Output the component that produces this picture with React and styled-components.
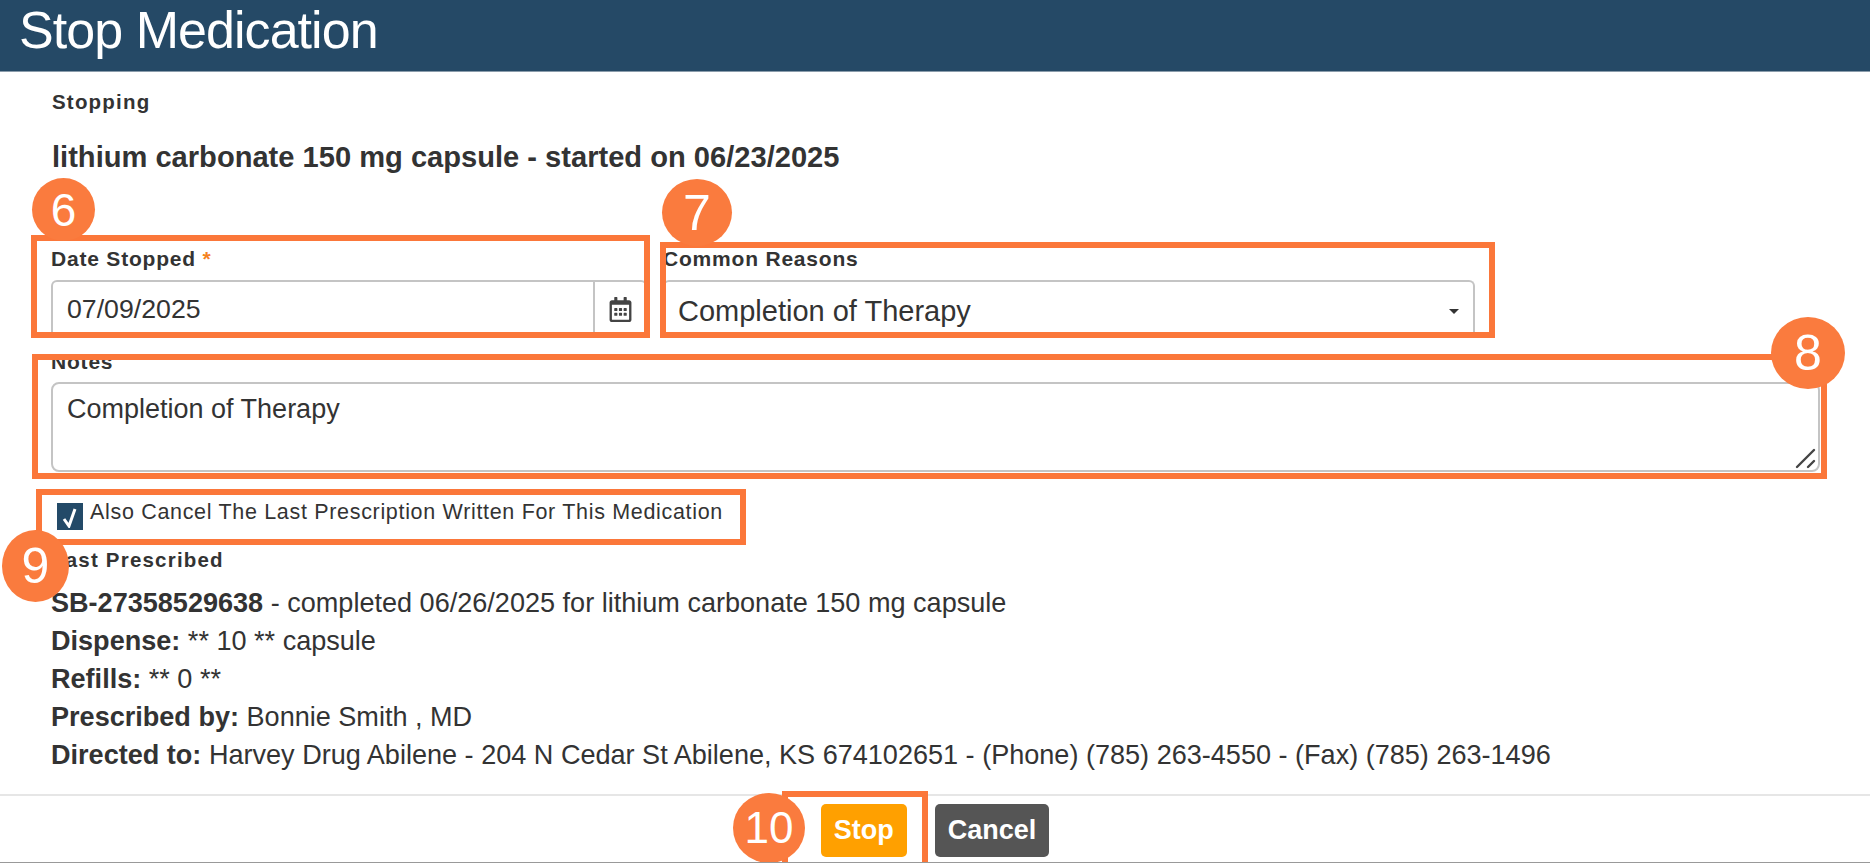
import React from 'react';
import styled, { createGlobalStyle } from 'styled-components';
import { FaRegCalendarAlt } from 'react-icons/fa';

const GlobalStyle = createGlobalStyle`
  html, body {
    margin: 0;
    padding: 0;
    background: #fff;
  }
  * {
    box-sizing: border-box;
  }
`;

// Page frame
const Page = styled.div`
  position: relative;
  width: 1870px;
  height: 863px;
  overflow: hidden;
  display: flex;
  flex-direction: column;
  font-family: 'Liberation Sans', Arial, sans-serif;
  color: #333;
  background: #fff;
  border-bottom: 1px solid #999;
`;

const Header = styled.header`
  height: 72px;
  flex: none;
  display: flex;
  align-items: center;
  padding: 0 0 11px 19px;
  background: #254966;
  border-bottom: 1px solid #8a9cab;
`;

const Title = styled.h1`
  margin: 0;
  font-size: 52px;
  line-height: 60px;
  font-weight: 400;
  letter-spacing: -0.95px;
  color: #fff;
`;

const Body = styled.main`
  flex: 1;
  display: flex;
  flex-direction: column;
  padding: 20px 50px 0 51px;
`;

const SmallHeading = styled.div`
  margin-left: 1px;
  font-size: 20.5px;
  line-height: 20px;
  font-weight: 700;
  letter-spacing: 1.2px;
  color: #333;
`;

const MedicationName = styled.div`
  margin: 30px 0 0 1px;
  font-size: 29.1px;
  line-height: 30px;
  font-weight: 700;
`;

const FieldRow = styled.div`
  margin-top: 77px;
  display: grid;
  grid-template-columns: 596px 812px;
  column-gap: 16px;
`;

const FieldLabel = styled.label`
  display: block;
  height: 21px;
  margin-bottom: 10px;
  font-size: 21px;
  line-height: 20px;
  font-weight: 700;
  letter-spacing: 0.8px;
  color: #333;
`;

const Required = styled.span`
  color: #f5821f;
`;

const InputGroup = styled.div`
  display: flex;
  height: 56px;
  margin-bottom: 4px;
  border: 2px solid #c4c4c4;
  border-bottom: 0;
  border-radius: 6px 6px 0 0;
`;

const DateInput = styled.input`
  flex: 1;
  min-width: 0;
  height: 54px;
  padding: 0 0 0 14px;
  border: 0;
  outline: 0;
  background: transparent;
  font: 400 26.7px 'Liberation Sans', Arial, sans-serif;
  color: #333;
`;

const Addon = styled.span`
  width: 52px;
  flex: none;
  display: flex;
  justify-content: center;
  padding-top: 15px;
  border-left: 2px solid #c4c4c4;
  color: #444;
  font-size: 25px;
`;

const SelectWrap = styled.div`
  position: relative;
  height: 56px;
  margin-bottom: 4px;
  border: 2px solid #c4c4c4;
  border-bottom: 0;
  border-radius: 6px 6px 0 0;
`;

const Select = styled.select`
  width: 100%;
  height: 54px;
  padding: 3px 0 0 13px;
  border: 0;
  outline: 0;
  appearance: none;
  background: transparent;
  font: 400 29px 'Liberation Sans', Arial, sans-serif;
  color: #333;
`;

const Caret = styled.span`
  position: absolute;
  right: 14px;
  top: 27px;
  border-left: 5px solid transparent;
  border-right: 5px solid transparent;
  border-top: 5px solid #333;
`;

const NotesField = styled.div`
  position: relative;
  margin-top: 12px;
`;

const NotesInput = styled.textarea`
  display: block;
  width: 100%;
  height: 90px;
  padding: 10px 14px;
  border: 2px solid #c4c4c4;
  border-radius: 8px;
  outline: 0;
  resize: none;
  background: #fff;
  font: 400 27px/30px 'Liberation Sans', Arial, sans-serif;
  color: #333;
`;

const NotesLabel = styled(FieldLabel)`
  margin-bottom: 9px;
`;

const ResizeGrip = styled.svg`
  position: absolute;
  right: 3px;
  bottom: 3px;
`;

const CheckRow = styled.label`
  display: flex;
  align-items: flex-start;
  margin-top: 31px;
  margin-left: 6px;
  height: 40px;
`;

const CheckBox = styled.span`
  width: 26px;
  height: 27px;
  flex: none;
  display: flex;
  align-items: center;
  justify-content: center;
  background: #234a68;
`;

const CheckText = styled.span`
  margin-left: 7px;
  margin-top: -3px;
  font-size: 21.5px;
  line-height: 24px;
  letter-spacing: 0.68px;
  color: #333;
`;

const LastPrescribed = styled(SmallHeading)`
  margin-top: 7px;
`;

const DetailList = styled.div`
  margin-top: 14px;
  font-size: 27.07px;
  line-height: 38px;
  color: #333;
`;

const DetailLine = styled.div`
  white-space: nowrap;
`;

const Footer = styled.footer`
  height: 68px;
  flex: none;
  display: flex;
  align-items: flex-start;
  justify-content: center;
  gap: 28px;
  padding-top: 8px;
  border-top: 2px solid #e6e6e6;
`;

const Button = styled.button`
  height: 53px;
  padding: 0 ${p => p.$pad}px;
  border: 0;
  border-radius: 5px;
  background: ${p => p.$bg};
  font: 700 27px 'Liberation Sans', Arial, sans-serif;
  color: #fff;
`;

// Tutorial annotations drawn over the form
const Outline = styled.div`
  position: absolute;
  left: ${p => p.$x}px;
  top: ${p => p.$y}px;
  width: ${p => p.$w}px;
  height: ${p => p.$h}px;
  border: 6px solid #fb773a;
  pointer-events: none;
`;

const Badge = styled.div`
  position: absolute;
  left: ${p => p.$x}px;
  top: ${p => p.$y}px;
  width: ${p => p.$w}px;
  height: ${p => p.$h}px;
  display: flex;
  align-items: center;
  justify-content: center;
  border-radius: 50%;
  background: #fa7b3e;
  color: #fff;
  font-size: ${p => p.$size}px;
`;

const outlines = [
  { x: 31, y: 235, w: 619, h: 103 },
  { x: 660, y: 242, w: 835, h: 96 },
  { x: 32, y: 354, w: 1795, h: 125 },
  { x: 36, y: 489, w: 710, h: 56 },
  { x: 782, y: 791, w: 146, h: 80 },
];

const badges = [
  { label: '6', x: 32, y: 178, w: 63, h: 63, size: 46 },
  { label: '7', x: 662, y: 179, w: 70, h: 67, size: 50 },
  { label: '8', x: 1771, y: 317, w: 74, h: 72, size: 50 },
  { label: '9', x: 2, y: 530, w: 67, h: 72, size: 50 },
  { label: '10', x: 733, y: 793, w: 72, h: 70, size: 44 },
];

export default function App() {
  return (
    <Page>
      <GlobalStyle />
      <Header>
        <Title>Stop Medication</Title>
      </Header>

      <Body>
        <SmallHeading>Stopping</SmallHeading>
        <MedicationName>lithium carbonate 150 mg capsule - started on 06/23/2025</MedicationName>

        <FieldRow>
          <div>
            <FieldLabel>
              Date Stopped <Required>*</Required>
            </FieldLabel>
            <InputGroup>
              <DateInput defaultValue="07/09/2025" />
              <Addon>
                <FaRegCalendarAlt />
              </Addon>
            </InputGroup>
          </div>
          <div>
            <FieldLabel>Common Reasons</FieldLabel>
            <SelectWrap>
              <Select defaultValue="completion">
                <option value="completion">Completion of Therapy</option>
              </Select>
              <Caret />
            </SelectWrap>
          </div>
        </FieldRow>

        <NotesField>
          <NotesLabel>Notes</NotesLabel>
          <NotesInput defaultValue="Completion of Therapy" />
          <ResizeGrip width="22" height="22" viewBox="0 0 22 22">
            <path d="M2 20 L19 3 M13 20 L19 14" stroke="#444" strokeWidth="2.4" strokeLinecap="round" fill="none" />
          </ResizeGrip>
        </NotesField>

        <CheckRow>
          <CheckBox>
            <svg width="18" height="22" viewBox="0 0 18 22">
              <path d="M3 13 L8 20 L14 3" stroke="#fff" strokeWidth="3" fill="none" />
            </svg>
          </CheckBox>
          <CheckText>Also Cancel The Last Prescription Written For This Medication</CheckText>
        </CheckRow>

        <LastPrescribed>Last Prescribed</LastPrescribed>

        <DetailList>
          <DetailLine>
            <b>SB-27358529638</b> - completed 06/26/2025 for lithium carbonate 150 mg capsule
          </DetailLine>
          <DetailLine>
            <b>Dispense:</b> ** 10 ** capsule
          </DetailLine>
          <DetailLine>
            <b>Refills:</b> ** 0 **
          </DetailLine>
          <DetailLine>
            <b>Prescribed by:</b> Bonnie Smith , MD
          </DetailLine>
          <DetailLine>
            <b>Directed to:</b> Harvey Drug Abilene - 204 N Cedar St Abilene, KS 674102651 - (Phone) (785) 263-4550 - (Fax) (785) 263-1496
          </DetailLine>
        </DetailList>
      </Body>

      <Footer>
        <Button $bg="#ffa000" $pad={13}>Stop</Button>
        <Button $bg="#555555" $pad={13}>Cancel</Button>
      </Footer>

      {outlines.map(o => (
        <Outline key={`${o.x}-${o.y}`} $x={o.x} $y={o.y} $w={o.w} $h={o.h} />
      ))}
      {badges.map(b => (
        <Badge key={b.label} $x={b.x} $y={b.y} $w={b.w} $h={b.h} $size={b.size}>
          {b.label}
        </Badge>
      ))}
    </Page>
  );
}
